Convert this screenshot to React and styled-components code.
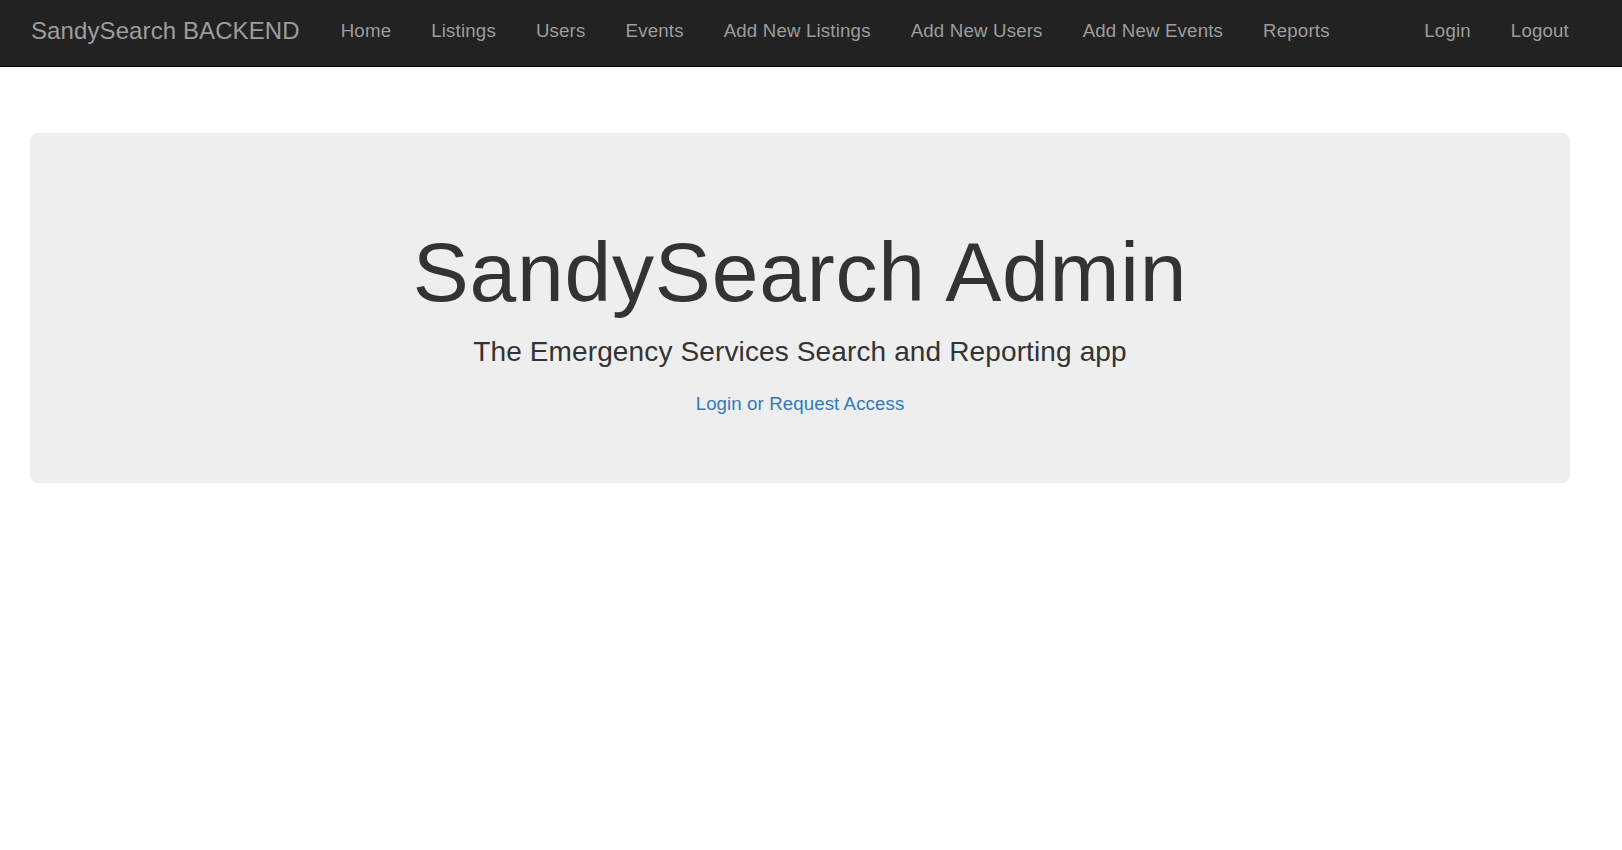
import React from "react";
import styled, { createGlobalStyle } from "styled-components";

const GlobalStyle = createGlobalStyle`
  html, body {
    margin: 0;
    padding: 0;
    background: #ffffff;
  }
  body {
    font-family: "Liberation Sans", Arial, Helvetica, sans-serif;
    color: #333333;
    font-size: 18.67px;
    line-height: 1.42857;
  }
  * { box-sizing: border-box; }
`;

const Navbar = styled.nav`
  height: 67px;
  background: #222222;
  border-bottom: 1px solid #080808;
  display: flex;
  align-items: center;
  padding: 0 33px 3px 11px;
`;

const Brand = styled.a`
  font-size: 24px;
  line-height: 26.67px;
  letter-spacing: 0.1px;
  color: #9d9d9d;
  padding: 0 21px 0 20px;
  text-decoration: none;
  white-space: nowrap;
`;

const NavList = styled.ul`
  display: flex;
  list-style: none;
  margin: 0;
  padding: 0;
  margin-left: ${(p) => (p.$right ? "auto" : "0")};
`;

const NavLink = styled.a`
  display: block;
  font-size: 18.67px;
  line-height: 26.67px;
  letter-spacing: 0.18px;
  color: #9d9d9d;
  padding: 0 20px;
  text-decoration: none;
  white-space: nowrap;
`;

const Jumbotron = styled.section`
  margin: 66px 52px 0 30px;
  padding: 64px 80px 66px;
  background: #eeeeee;
  border-radius: 8px;
  text-align: center;
`;

const Title = styled.h1`
  font-size: 84px;
  line-height: 92.4px;
  font-weight: 500;
  letter-spacing: 0.8px;
  margin: 29px 0 13.33px;
  color: #333333;
`;

const Lead = styled.p`
  font-size: 28px;
  line-height: 40px;
  letter-spacing: 0.13px;
  margin: 0 0 19px;
  font-weight: 200;
`;

const LinkLine = styled.p`
  font-size: 18.67px;
  line-height: 26.67px;
  letter-spacing: 0.1px;
  margin: 0;
`;

const AccessLink = styled.a`
  color: #337ab7;
  text-decoration: none;
`;

const leftLinks = [
  "Home",
  "Listings",
  "Users",
  "Events",
  "Add New Listings",
  "Add New Users",
  "Add New Events",
  "Reports",
];

const rightLinks = ["Login", "Logout"];

export default function App() {
  return (
    <>
      <GlobalStyle />
      <Navbar>
        <Brand href="#">SandySearch BACKEND</Brand>
        <NavList>
          {leftLinks.map((l) => (
            <li key={l}>
              <NavLink href="#">{l}</NavLink>
            </li>
          ))}
        </NavList>
        <NavList $right>
          {rightLinks.map((l) => (
            <li key={l}>
              <NavLink href="#">{l}</NavLink>
            </li>
          ))}
        </NavList>
      </Navbar>
      <Jumbotron>
        <Title>SandySearch Admin</Title>
        <Lead>The Emergency Services Search and Reporting app</Lead>
        <LinkLine>
          <AccessLink href="#">Login or Request Access</AccessLink>
        </LinkLine>
      </Jumbotron>
    </>
  );
}
